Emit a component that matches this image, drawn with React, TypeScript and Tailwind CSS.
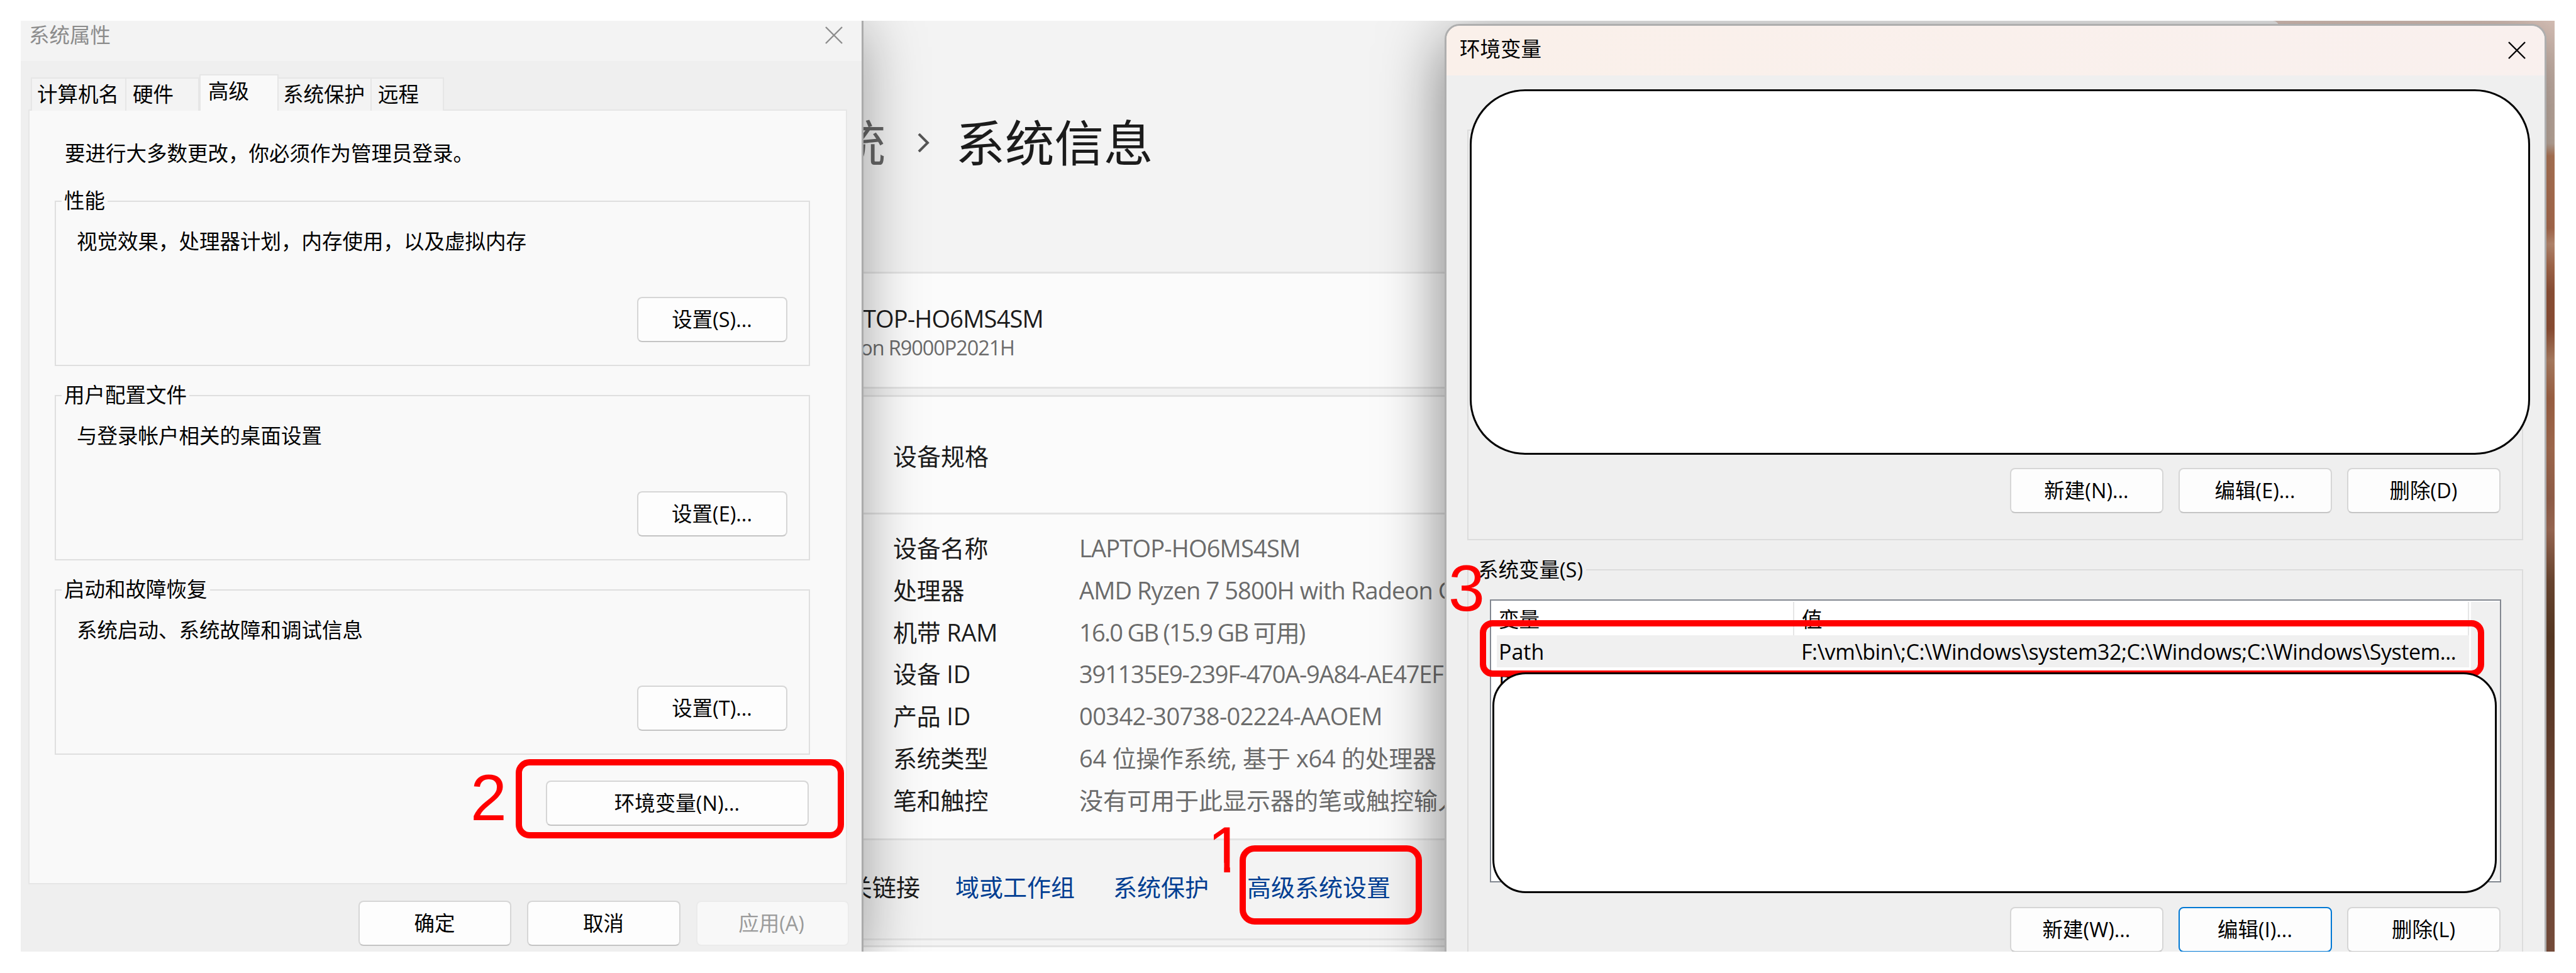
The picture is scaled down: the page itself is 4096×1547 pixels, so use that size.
import type { ReactNode } from "react";

const base = "font-['Open_Sans','Noto_Sans_CJK_SC',sans-serif]";

function Button({ children, className = "" }: { children: ReactNode; className?: string }) {
  return (
    <div
      className={`flex shrink-0 items-center justify-center rounded-[8px] border-2 border-[#d6d6d6] border-b-[#c4c4c4] bg-[#fdfdfd] ${className}`}
    >
      <span className="-ml-[1px]">{children}</span>
    </div>
  );
}

function CloseIcon({ className = "" }: { className?: string }) {
  return (
    <svg viewBox="0 0 28 28" className={`h-[28px] w-[28px] shrink-0 ${className}`} fill="none" stroke="currentColor" strokeWidth="2.4">
      <path d="M1 1 L27 27 M27 1 L1 27" />
    </svg>
  );
}

function Tab({ label, className }: { label: string; className: string }) {
  return (
    <div className={`h-[53px] border-t-2 border-r-2 border-[#e6e6e6] bg-[#f3f3f3] leading-[50px] ${className}`}>{label}</div>
  );
}

function Group({ title, text, button }: { title: string; text: string; button: string }) {
  return (
    <fieldset className="relative mb-[46px] h-[263px] w-[1201px] border-2 border-[#dfdfdf]">
      <div className="flex h-full flex-col">
        <span className="-mt-[24px] ml-[9px] h-[46px] self-start bg-[#f9f9f9] px-[4px] leading-[44px]">{title}</span>
        <span className="mt-[19px] ml-[33px] h-[46px] leading-[44px]">{text}</span>
        <Button className="mt-[64px] mr-[34px] h-[72px] w-[239px] self-end">{button}</Button>
      </div>
    </fieldset>
  );
}

function SystemProperties() {
  return (
    <section className="absolute top-[-10px] left-0 flex h-[1500px] w-[1340px] flex-col border-r-[3px] border-[#ababab] bg-[#efefef] pt-[10px] text-[32.5px] text-black shadow-[0_20px_90px_rgba(0,0,0,0.36)]">
      <header className="flex h-[64px] justify-between bg-[#f3f3f3] pr-[30px] pl-[13px] text-[#8c8c8c]">
        <span className="leading-[45px]">系统属性</span>
        <CloseIcon className="mt-[9px]" />
      </header>
      <nav className="z-10 mt-[21px] -mb-[2px] flex h-[58px] items-end pl-[16px]">
        <Tab label="计算机名" className="w-[152px] border-l-2 pl-[8px]" />
        <Tab label="硬件" className="w-[116px] pl-[10px]" />
        <div className="h-[58px] w-[126px] border-2 border-b-0 border-[#e6e6e6] bg-[#f9f9f9] pl-[12px] leading-[50px]">高级</div>
        <Tab label="系统保护" className="w-[148px] pl-[7px]" />
        <Tab label="远程" className="w-[115px] pl-[10px]" />
      </nav>
      <div className="ml-[12px] h-[1232px] w-[1302px] border-2 border-[#e6e6e6] bg-[#f9f9f9] pl-[40px]">
        <p className="mt-[44px] mb-[50px] ml-[16px] h-[49px] leading-[47px]">要进行大多数更改，你必须作为管理员登录。</p>
        <Group title="性能" text="视觉效果，处理器计划，内存使用，以及虚拟内存" button="设置(S)..." />
        <Group title="用户配置文件" text="与登录帐户相关的桌面设置" button="设置(E)..." />
        <Group title="启动和故障恢复" text="系统启动、系统故障和调试信息" button="设置(T)..." />
        <Button className="-mt-[5px] ml-[781px] h-[72px] w-[418px]">环境变量(N)...</Button>
      </div>
      <footer className="mt-[26px] flex gap-[25px] pl-[537px]">
        <Button className="h-[72px] w-[243px]">确定</Button>
        <Button className="h-[72px] w-[244px]">取消</Button>
        <div className="flex h-[72px] w-[243px] items-center justify-center rounded-[8px] border-2 border-[#ebebeb] bg-[#f8f8f8] pr-[4px] text-[#9b9b9b]">
          应用(A)
        </div>
      </footer>
    </section>
  );
}

const specs: { label: string; value: string; tracking: string }[] = [
  { label: "设备名称", value: "LAPTOP-HO6MS4SM", tracking: "tracking-[-0.8px]" },
  { label: "处理器", value: "AMD Ryzen 7 5800H with Radeon Graphics", tracking: "tracking-[-0.9px]" },
  { label: "机带 RAM", value: "16.0 GB (15.9 GB 可用)", tracking: "tracking-[-1.7px]" },
  { label: "设备 ID", value: "391135E9-239F-470A-9A84-AE47EF", tracking: "tracking-[-1.2px]" },
  { label: "产品 ID", value: "00342-30738-02224-AAOEM", tracking: "tracking-[-0.6px]" },
  { label: "系统类型", value: "64 位操作系统, 基于 x64 的处理器", tracking: "tracking-[-0.3px]" },
  { label: "笔和触控", value: "没有可用于此显示器的笔或触控输入", tracking: "tracking-[0px]" },
];

function SettingsWindow() {
  return (
    <section className="absolute top-0 left-[1000px] flex h-[1500px] w-[2591px] flex-col rounded-tr-[10px] bg-[#f3f3f3] text-[38px] text-[#1b1b1b]">
      <h1 className="flex h-[400px] items-center pb-[12px] pl-[297px] text-[78.5px] whitespace-nowrap">
        <span className="text-[#666]">统</span>
        <svg viewBox="0 0 20 30" className="ml-[49px] h-[30px] w-[20px]" fill="none" stroke="#555" strokeWidth="4">
          <path d="M3 1 L17 15 L3 29" />
        </svg>
        <span className="ml-[42px]">系统信息</span>
      </h1>
      <div className="h-[186px] border-y-[3px] border-[#e3e3e3] bg-[#fbfbfb] whitespace-nowrap">
        <div className="mt-[46px] h-[52px] w-[626px] text-right leading-[51px] tracking-[-0.8px]">LAPTOP-HO6MS4SM</div>
        <div className="mt-[-2px] h-[44px] w-[580px] text-right text-[32.5px] leading-[44px] tracking-[-1.1px] text-[#6b6b6b]">
          Legion R9000P2021H
        </div>
      </div>
      <div className="mt-[10px] h-[187px] border-t-[3px] border-[#e3e3e3] bg-[#fbfbfb] pt-[64px] pl-[387px] leading-[60px]">设备规格</div>
      <dl className="h-[519px] border-t-[3px] border-[#e3e3e3] bg-[#fbfbfb] pt-[20px] pl-[387px]">
        {specs.map((s) => (
          <div key={s.label} className="flex h-[66.8px] leading-[66.8px] whitespace-nowrap">
            <dt className="w-[296px] tracking-[-0.2px]">{s.label}</dt>
            <dd className={`text-[#6b6b6b] ${s.tracking}`}>{s.value}</dd>
          </div>
        ))}
      </dl>
      <div className="flex h-[162px] items-center border-y-[3px] border-[#e3e3e3] pb-[8px] pl-[278px] whitespace-nowrap">
        <span>相关链接</span>
        <span className="ml-[56px] text-[#003e92]">域或工作组</span>
        <span className="ml-[61px] text-[#003e92]">系统保护</span>
        <span className="ml-[61px] text-[#003e92]">高级系统设置</span>
      </div>
      <div className="mt-[8px] h-[30px] border-t-[3px] border-[#e3e3e3] bg-[#fbfbfb]" />
    </section>
  );
}

function EnvironmentVariables() {
  return (
    <section className="absolute top-[5px] left-[2264px] flex h-[1560px] w-[1752px] flex-col rounded-t-[24px] border-[3px] border-[#aeaeae] bg-[#efefef] text-[32.5px] text-black shadow-[0_24px_100px_rgba(0,0,0,0.5)]">
      <header className="flex h-[79px] shrink-0 items-center justify-between rounded-t-[21px] bg-gradient-to-r from-[#faf0ea] to-[#f9f0ee] pr-[30px] pb-[2px] pl-[21px]">
        <span className="pb-[2px]">环境变量</span>
        <CloseIcon />
      </header>
      <div className="mt-[86px] ml-[33px] flex h-[653px] w-[1679px] shrink-0 items-end justify-end gap-[24px] border-2 border-[#dcdcdc] pr-[34px] pb-[41px]">
        <Button className="h-[72px] w-[244px]">新建(N)...</Button>
        <Button className="h-[72px] w-[244px]">编辑(E)...</Button>
        <Button className="h-[72px] w-[244px]">删除(D)</Button>
      </div>
      <div className="mt-[46px] ml-[33px] flex h-[700px] w-[1679px] shrink-0 flex-col border-2 border-[#dcdcdc] pl-[34px]">
        <span className="-mt-[24px] -ml-[24px] h-[46px] self-start bg-[#efefef] px-[5px] leading-[45px]">系统变量(S)</span>
        <div className="mt-[24px] flex h-[450px] w-[1608px] border-2 border-[#828790] bg-white">
          <div className="w-[1555px]">
            <div className="mt-[2px] flex h-[53px] border-r-2 border-[#e5e5e5] leading-[55px]">
              <span className="w-[482px] border-r-2 border-[#e5e5e5] pl-[12px]">变量</span>
              <span className="pl-[12px]">值</span>
            </div>
            <div className="ml-[9px] flex h-[51px] bg-[#f0f0f0] text-[34px] leading-[52px] whitespace-nowrap">
              <span className="w-[484px] pl-[3px]">Path</span>
              <span className="tracking-[-0.45px]">F:\vm\bin\;C:\Windows\system32;C:\Windows;C:\Windows\System...</span>
            </div>
            <div className="pl-[12px] text-[34px] leading-[51px]">P</div>
          </div>
          <div className="mt-[2px] ml-auto h-[442px] w-[46px] bg-[#f0f0f0]" />
        </div>
        <div className="mt-[39px] flex justify-end gap-[24px] pr-[34px]">
          <Button className="h-[72px] w-[244px]">新建(W)...</Button>
          <Button className="h-[72px] w-[244px] !border-[#0078d4]">编辑(I)...</Button>
          <Button className="h-[72px] w-[244px]">删除(L)</Button>
        </div>
      </div>
    </section>
  );
}

const numeral = "absolute font-['Liberation_Sans',sans-serif] text-[104px] leading-[104px] text-[#f00]";

function Annotations() {
  return (
    <>
      <div className="absolute top-[1174px] left-[787px] h-[126px] w-[522px] rounded-[22px] border-[10px] border-[#f00]" />
      <span className={`${numeral} top-[1183px] left-[715px]`}>2</span>
      <div className="absolute top-[1311px] left-[1938px] h-[126px] w-[290px] rounded-[24px] border-[10px] border-[#f00]" />
      <span className={`${numeral} top-[1266px] left-[1887px] [clip-path:polygon(0_0,100%_0,100%_70%,62%_70%,62%_100%,45.5%_100%,45.5%_70%,0_70%)]`}>1</span>
      <div className="absolute top-[953px] left-[2320px] h-[90px] w-[1597px] rounded-[20px] border-[10px] border-[#f00]" />
      <span className={`${numeral} top-[850px] left-[2270px]`}>3</span>
      <div className="absolute top-[109px] left-[2304px] h-[581px] w-[1686px] rounded-[88px] border-[3.5px] border-black bg-white" />
      <div className="absolute top-[1036px] left-[2340px] h-[351px] w-[1597px] rounded-[53px] border-[3.5px] border-black bg-white" />
    </>
  );
}

export default function App() {
  return (
    <main className={`h-[1547px] w-[4096px] overflow-hidden bg-white p-[33px] ${base}`}>
      <div className="relative h-[1480px] w-[4029px] overflow-hidden bg-[linear-gradient(180deg,#ddc6bc_0px,#d9c3b7_120px,#d6c0b2_195px,#cc8a65_215px,#c87e5c_330px,#dca586_355px,#c67e5b_390px,#ac6242_430px,#ab5f3f_490px,#d09876_540px,#c07753_600px,#c68260_680px,#b4755a_760px,#bd8066_810px,#84573c_890px,#6b452b_980px,#764a34_1100px,#8e5b45_1300px,#94604a_1480px)]">
        <SettingsWindow />
        <SystemProperties />
        <EnvironmentVariables />
        <Annotations />
      </div>
    </main>
  );
}
